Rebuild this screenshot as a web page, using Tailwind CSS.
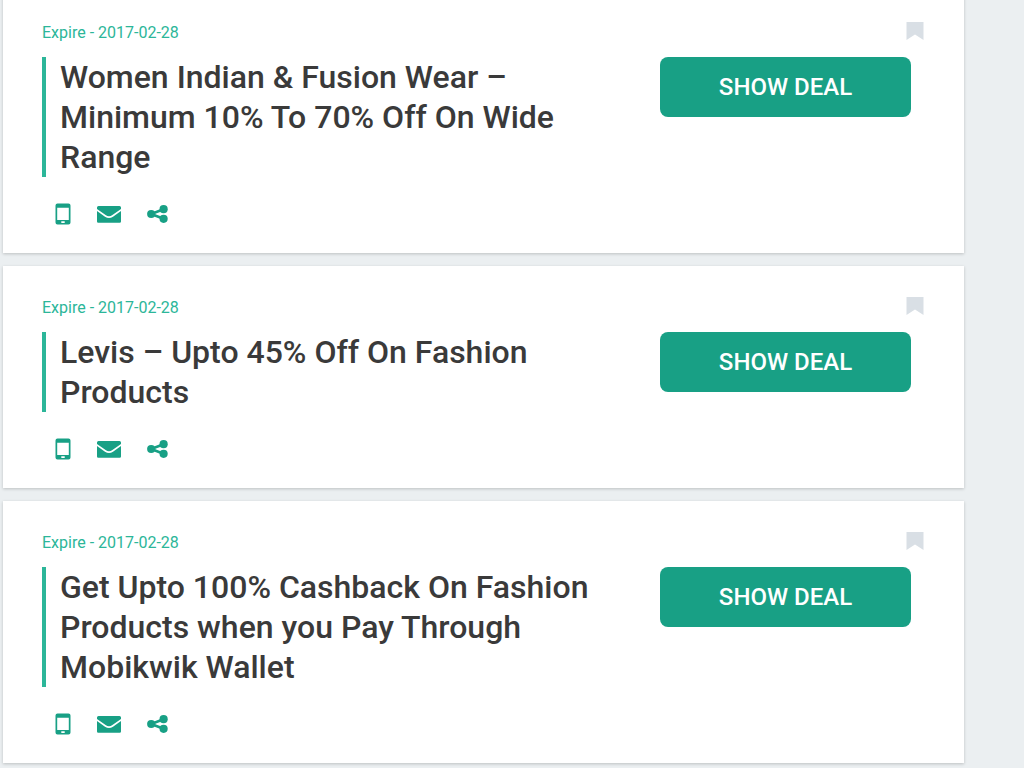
<!DOCTYPE html>
<html lang="en">

<head>
    <meta charset="UTF-8">
    <meta name="viewport" content="width=device-width, initial-scale=1.0">
    <title>Fashion Deals</title>
    <script src="https://cdn.jsdelivr.net/npm/@tailwindcss/browser@4"></script>
</head>

<body class="bg-[#ebeff1] font-['Roboto',sans-serif] min-h-screen">
    <!-- Shared icons -->
    <svg class="hidden">
        <symbol id="icon-mobile" viewBox="0 0 16 22">
            <path fill-rule="evenodd" d="M2.5 0.5h11a2 2 0 0 1 2 2v17a2 2 0 0 1-2 2h-11a2 2 0 0 1-2-2v-17a2 2 0 0 1 2-2zM2.2 4.8v12.2h11.6V4.8zM6.3 18.3v1.6h3.4v-1.6z" />
        </symbol>
        <symbol id="icon-mail" viewBox="0 0 24 17">
            <path d="M1.5 0h21a1.5 1.5 0 0 1 1.5 1.5v1.6l-8.6 5.9q-3.4 2.6-6.8 0L0 3.1V1.5A1.5 1.5 0 0 1 1.5 0z" />
            <path d="M0 4.9l8 5.8q4 2.8 8 0L24 4.9V15.5a1.3 1.3 0 0 1-1.3 1.3H1.3A1.3 1.3 0 0 1 0 15.5z" />
        </symbol>
        <symbol id="icon-share" viewBox="0 0 21 18">
            <circle cx="4.2" cy="9" r="4.1" />
            <circle cx="16.6" cy="4.2" r="4.1" />
            <circle cx="16.6" cy="13.8" r="4.1" />
            <path d="M3.6 7.8L16.2 3l.9 2.4L4.5 10.2zM4.5 7.8l12.6 4.8-.9 2.4L3.6 10.2z" />
        </symbol>
        <symbol id="icon-bookmark" viewBox="0 0 18 18">
            <path d="M0.5 0h17v18L9 12.5 0.5 18z" />
        </symbol>
    </svg>

    <main class="flex flex-col gap-[13px] -mt-[9px] ml-[3px] mr-15 pb-1">
        <article class="bg-white shadow-[0_1px_3px_rgba(0,0,0,0.2)] pt-[31px] pb-7 pl-[39px] pr-10">
            <div class="flex justify-between items-start h-[35px]">
                <p class="text-base leading-[22px] text-[#2cb699]">Expire - 2017-02-28</p>
                <button type="button" aria-label="Save deal" class="text-[#d9dfe5] cursor-pointer">
                    <svg class="w-[18px] h-[18px] fill-current"><use href="#icon-bookmark" /></svg>
                </button>
            </div>
            <div class="flex justify-between items-start gap-8 pr-[13px]">
                <h2 class="border-l-4 border-[#2cb699] pl-[14px] text-[32px] leading-10 font-medium text-[#3a3a3a] max-w-[562px]">Women Indian &amp; Fusion Wear – Minimum 10% To 70% Off On Wide Range</h2>
                <a href="#" class="shrink-0 w-[251px] h-15 rounded-lg bg-[#18a085] text-white text-2xl font-medium flex items-center justify-center">SHOW DEAL</a>
            </div>
            <div class="flex items-center gap-[26px] mt-[26px] pl-[13px] h-[22px] text-[#18a085]">
                <a href="#" aria-label="Send to phone"><svg class="w-4 h-[22px] fill-current"><use href="#icon-mobile" /></svg></a>
                <a href="#" aria-label="Send by mail"><svg class="w-6 h-[17px] fill-current"><use href="#icon-mail" /></svg></a>
                <a href="#" aria-label="Share"><svg class="w-[21px] h-[18px] fill-current"><use href="#icon-share" /></svg></a>
            </div>
        </article>

        <article class="bg-white shadow-[0_1px_3px_rgba(0,0,0,0.2)] pt-[31px] pb-7 pl-[39px] pr-10">
            <div class="flex justify-between items-start h-[35px]">
                <p class="text-base leading-[22px] text-[#2cb699]">Expire - 2017-02-28</p>
                <button type="button" aria-label="Save deal" class="text-[#d9dfe5] cursor-pointer">
                    <svg class="w-[18px] h-[18px] fill-current"><use href="#icon-bookmark" /></svg>
                </button>
            </div>
            <div class="flex justify-between items-start gap-8 pr-[13px]">
                <h2 class="border-l-4 border-[#2cb699] pl-[14px] text-[32px] leading-10 font-medium text-[#3a3a3a] max-w-[562px]">Levis – Upto 45% Off On Fashion Products</h2>
                <a href="#" class="shrink-0 w-[251px] h-15 rounded-lg bg-[#18a085] text-white text-2xl font-medium flex items-center justify-center">SHOW DEAL</a>
            </div>
            <div class="flex items-center gap-[26px] mt-[26px] pl-[13px] h-[22px] text-[#18a085]">
                <a href="#" aria-label="Send to phone"><svg class="w-4 h-[22px] fill-current"><use href="#icon-mobile" /></svg></a>
                <a href="#" aria-label="Send by mail"><svg class="w-6 h-[17px] fill-current"><use href="#icon-mail" /></svg></a>
                <a href="#" aria-label="Share"><svg class="w-[21px] h-[18px] fill-current"><use href="#icon-share" /></svg></a>
            </div>
        </article>

        <article class="bg-white shadow-[0_1px_3px_rgba(0,0,0,0.2)] pt-[31px] pb-7 pl-[39px] pr-10">
            <div class="flex justify-between items-start h-[35px]">
                <p class="text-base leading-[22px] text-[#2cb699]">Expire - 2017-02-28</p>
                <button type="button" aria-label="Save deal" class="text-[#d9dfe5] cursor-pointer">
                    <svg class="w-[18px] h-[18px] fill-current"><use href="#icon-bookmark" /></svg>
                </button>
            </div>
            <div class="flex justify-between items-start gap-8 pr-[13px]">
                <h2 class="border-l-4 border-[#2cb699] pl-[14px] text-[32px] leading-10 font-medium text-[#3a3a3a] max-w-[562px]">Get Upto 100% Cashback On Fashion Products when you Pay Through Mobikwik Wallet</h2>
                <a href="#" class="shrink-0 w-[251px] h-15 rounded-lg bg-[#18a085] text-white text-2xl font-medium flex items-center justify-center">SHOW DEAL</a>
            </div>
            <div class="flex items-center gap-[26px] mt-[26px] pl-[13px] h-[22px] text-[#18a085]">
                <a href="#" aria-label="Send to phone"><svg class="w-4 h-[22px] fill-current"><use href="#icon-mobile" /></svg></a>
                <a href="#" aria-label="Send by mail"><svg class="w-6 h-[17px] fill-current"><use href="#icon-mail" /></svg></a>
                <a href="#" aria-label="Share"><svg class="w-[21px] h-[18px] fill-current"><use href="#icon-share" /></svg></a>
            </div>
        </article>
    </main>
</body>

</html>
